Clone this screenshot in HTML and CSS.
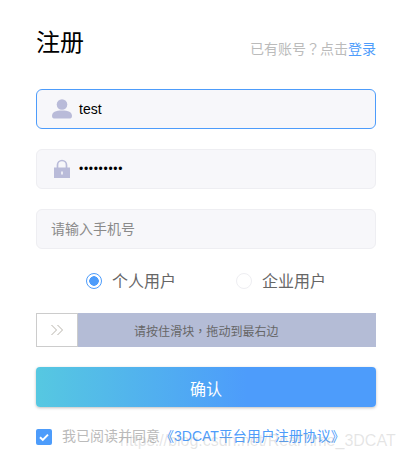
FILE: index.html
```html
<!DOCTYPE html>
<html lang="zh">
<head>
<meta charset="utf-8">
<title>注册</title>
<link rel="stylesheet" href="styles.css">
</head>
<body>
<main class="form">
  <header class="head">
    <h1 class="title">注册</h1>
    <p class="login">已有账号<span class="punct" lang="zh-TW">？</span>点击<a class="link" href="#">登录</a></p>
  </header>
  <div class="fields">
    <div class="field field-active">
      <svg class="ico" viewBox="0 0 20 20" width="20" height="20"><circle cx="10" cy="5.5" r="5.3" fill="#b9bbd9"/><path d="M0 17c0-3.6 3.6-5.4 10-5.4S20 13.400 20 17c0 1.800-1.200 2.600-2.800 2.600H2.800C1.200 19.600 0 18.800 0 17z" fill="#b9bbd9"/></svg>
      <span class="value">test</span>
    </div>
    <div class="field">
      <svg class="ico" viewBox="0 0 20 20" width="20" height="20"><path d="M5.500 9V6a4.500 4.500 0 0 1 9 0v3" fill="none" stroke="#b9bbd9" stroke-width="1.700"/><path d="M2 8.500h16v10.500H2z" fill="#b9bbd9"/><rect x="9.200" y="12.500" width="1.600" height="3" fill="#f7f7fa"/></svg>
      <span class="value dots">•••••••••</span>
    </div>
    <div class="field">
      <span class="placeholder">请输入手机号</span>
    </div>
  </div>
  <div class="radios">
    <label class="radio"><span class="dot dot-on"></span><span class="radio-text">个人用户</span></label>
    <label class="radio"><span class="dot"></span><span class="radio-text">企业用户</span></label>
  </div>
  <div class="slider">
    <div class="knob">
      <svg viewBox="0 0 14 12" width="14" height="12"><path d="M1.500 1l5 5-5 5M7.500 1l5 5-5 5" fill="none" stroke="#b8b4ac" stroke-width="1"/></svg>
    </div>
    <div class="track">请按住滑块<span class="punct" lang="zh-TW">，</span>拖动到最右边</div>
  </div>
  <button class="submit" type="button">确认</button>
  <div class="agree">
    <span class="check"><svg viewBox="0 0 16 16" width="16" height="16"><path d="M4 8.200l2.800 2.700L12 5.600" fill="none" stroke="#fff" stroke-width="2"/></svg></span>
    <span class="agree-text">我已阅读并同意<a class="link" href="#">《3DCAT平台用户注册协议》</a></span>
  </div>
</main>
<div class="watermark">https://blog.csdn.net/RealTime_3DCAT</div>
</body>
</html>
```
FILE: styles.css
```css
html, body {
  margin: 0;
  padding: 0;
  background: #fff;
}
body {
  position: relative;
  width: 406px;
  height: 462px;
  overflow: hidden;
  font-family: "Liberation Sans", "Noto Sans CJK SC", sans-serif;
}
.form {
  width: 340px;
  padding: 23px 30px 0 36px;
}
.head {
  display: flex;
  justify-content: space-between;
  align-items: flex-end;
  height: 36px;
}
.title {
  margin: 0;
  font-size: 24px;
  font-weight: 400;
  line-height: 32px;
  color: #000;
}
.login {
  margin: 0;
  font-size: 14px;
  line-height: 20px;
  color: #bbb;
}
.punct {
  font-family: "Noto Sans CJK TC", sans-serif;
}
.link {
  color: #4d9cfb;
  text-decoration: none;
}
.fields {
  display: flex;
  flex-direction: column;
  gap: 20px;
  margin-top: 30px;
}
.field {
  display: flex;
  align-items: center;
  box-sizing: border-box;
  height: 40px;
  padding: 0 14px;
  border: 1px solid #eeeef2;
  border-radius: 6px;
  background: #f7f7fa;
}
.field-active {
  border-color: #4d9cfb;
}
.ico {
  flex: none;
  margin: 0 7px 0 1px;
}
.value {
  font-size: 14px;
  color: #000;
}
.dots {
  font-size: 12px;
  letter-spacing: 0.7px;
}
.placeholder {
  margin-bottom: 2px;
  font-size: 14px;
  color: #8a8a8a;
}
.radios {
  display: flex;
  gap: 60px;
  margin: 22px 0 0 50px;
  height: 20px;
}
.radio {
  display: flex;
  align-items: center;
  font-size: 16px;
  line-height: 20px;
  color: #666;
}
.radio-text {
  margin-top: 2px;
}
.dot {
  box-sizing: border-box;
  width: 16px;
  height: 16px;
  margin-right: 10px;
  border: 1px solid #eeeef2;
  border-radius: 50%;
  background: #fff;
}
.dot-on {
  border-color: #4d9cfb;
  background: radial-gradient(circle, #4d9cfb 0 4.500px, #fff 5px);
}
.slider {
  display: flex;
  height: 34px;
  margin-top: 22px;
}
.knob {
  display: flex;
  align-items: center;
  justify-content: center;
  box-sizing: border-box;
  width: 42px;
  border: 1px solid #ccc;
  background: #fff;
}
.track {
  flex: 1;
  padding-left: 56px;
  font-size: 12px;
  line-height: 36px;
  letter-spacing: 0.05px;
  color: #666;
  background: #b4bcd6;
}
.submit {
  display: block;
  width: 340px;
  height: 40px;
  margin-top: 20px;
  padding: 2px 0 0;
  border: 0;
  border-radius: 4px;
  background: linear-gradient(90deg, #56c8e1, #4d9cfb 62%);
  box-shadow: 0 1px 3px rgba(0, 0, 0, .25);
  font: 16px "Liberation Sans", "Noto Sans CJK SC", sans-serif;
  color: #fff;
}
.agree {
  display: flex;
  align-items: center;
  height: 16px;
  margin-top: 22px;
}
.check {
  flex: none;
  width: 16px;
  height: 16px;
  margin-right: 10px;
  border-radius: 2px;
  background: #4d9cfb;
}
.check svg {
  display: block;
}
.agree-text {
  margin-bottom: 2px;
  font-size: 14px;
  line-height: 16px;
  white-space: nowrap;
  color: #bbb;
}
.watermark {
  position: absolute;
  left: 120px;
  top: 432px;
  font-size: 16px;
  line-height: 18px;
  white-space: nowrap;
  color: rgba(150, 150, 150, .25);
}
```
